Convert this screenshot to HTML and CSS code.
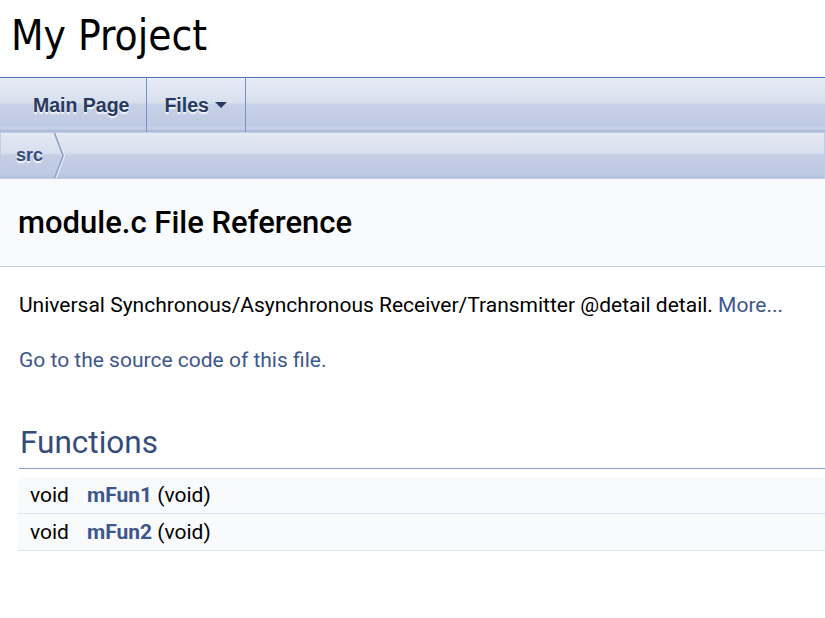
FILE: index.html
```html
<!DOCTYPE html>
<html>
<head>
<meta charset="utf-8">
<link rel="stylesheet" href="styles.css">
</head>
<body>
<div class="titlearea">
  <div class="projectname">My Project</div>
</div>
<nav class="tabs">
  <ul class="menu">
    <li class="tab"><a href="#" class="tab-main">Main Page</a></li>
    <li class="tab"><a href="#" class="has-sub">Files<span class="sub-arrow"></span></a></li>
  </ul>
</nav>
<div class="navpath">
  <ul>
    <li class="crumb"><a href="#">src</a><svg class="chev" width="12" height="45" viewBox="0 0 12 45"><path d="M2 0 L10.5 22.5 L2 45" fill="none" stroke="#e9eef6" stroke-width="3.2"/><path d="M1.5 0 L10 22.5 L1.5 45" fill="none" stroke="#8ea3cd" stroke-width="1.8"/></svg></li>
  </ul>
</div>
<div class="header">
  <div class="headertitle"><div class="title">module.c File Reference</div></div>
</div>
<div class="contents">
  <p class="brief">Universal Synchronous/Asynchronous Receiver/Transmitter @detail detail. <a href="#">More...</a></p>
  <p class="srclink"><a href="#">Go to the source code of this file.</a></p>
  <h2 class="groupheader">Functions</h2>
  <div class="memberdecls">
    <div class="memrow"><span class="memleft">void</span><span class="memright"><a href="#" class="el">mFun1</a> (void)</span></div>
    <div class="memrow"><span class="memleft">void</span><span class="memright"><a href="#" class="el">mFun2</a> (void)</span></div>
  </div>
</div>
</body>
</html>
```
FILE: styles.css
```css
html, body {
  margin: 0;
  padding: 0;
  background: #ffffff;
  overflow: hidden;
}
body {
  font-family: Roboto, "Liberation Sans", sans-serif;
  font-size: 21px;
  line-height: 33px;
  color: #000000;
}
a {
  color: #3D578C;
  text-decoration: none;
}
.titlearea {
  height: 77px;
  border-bottom: 1px solid #5373B4;
  display: flex;
  align-items: center;
  padding-left: 11px;
  box-sizing: content-box;
}
.projectname {
  font-family: "DejaVu Sans Condensed", "DejaVu Sans", sans-serif;
  font-size: 42px;
  line-height: 50px;
  margin-top: -6px;
  color: #000;
}
.tabs {
  height: 54px;
  background: linear-gradient(to bottom, #e7ecf5 0%, #d8e0ee 45%, #c6d0e6 50%, #bfcae3 88%, #cad4e9 93%, #b2c0de 97%, #a4b5d9 100%);
}
.menu {
  list-style: none;
  margin: 0;
  padding: 0 0 0 15px;
  display: flex;
  height: 54px;
}
.tab a {
  display: block;
  position: relative;
  height: 54px;
  line-height: 54px;
  padding: 0 17px 0 18px;
  font-family: "Liberation Sans", Arial, sans-serif;
  font-weight: bold;
  font-size: 19.5px;
  color: #283A5D;
  text-shadow: 0 1.5px 1.5px rgba(255,255,255,0.9);
  border-right: 1px solid #7a93c5;
}
.tab a.has-sub {
  padding: 0 36px 0 17px;
}
.sub-arrow {
  position: absolute;
  top: 50%;
  right: 18px;
  margin-top: -3px;
  width: 0;
  height: 0;
  border-left: 6px solid transparent;
  border-right: 6px solid transparent;
  border-top: 6px solid #283A5D;
}
.navpath ul {
  list-style: none;
  margin: 0;
  padding: 0;
  height: 45px;
  border: 1.5px solid #C2CDE4;
  background: linear-gradient(to bottom, #e4e9f3 0%, #d7dfee 45%, #c4cee5 50%, #bfcae3 90%, #b3c1de 100%);
  display: flex;
}
.crumb {
  display: flex;
  align-items: center;
  padding-left: 15px;
  height: 45px;
}
.crumb a {
  font-family: "Liberation Sans", Arial, sans-serif;
  font-weight: bold;
  font-size: 18px;
  color: #364D7C;
  text-shadow: 0 1.5px 1.5px rgba(255,255,255,0.9);
  line-height: 45px;
}
.chev {
  display: block;
  margin-left: 10px;
}
.header {
  background: #F9FAFC;
  border-bottom: 1px solid #C4CFE5;
  height: 87px;
  display: flex;
  align-items: center;
}
.headertitle {
  padding: 0 0 0 18px;
}
.title {
  font-family: Roboto, sans-serif;
  font-weight: 500;
  font-size: 31px;
  line-height: 40px;
  margin-top: 0;
}
.contents {
  padding: 0 0 0 18px;
}
.brief {
  margin: 22px 0 0 1px;
}
.srclink {
  margin: 22px 0 0 1px;
}
.groupheader {
  font-weight: normal;
  font-size: 31.5px;
  line-height: 40px;
  color: #354C7B;
  margin: 42px 0 0 1px;
  padding: 4px 0 5px 1px;
  border-bottom: 1.5px solid #879ECB;
}
.memberdecls {
  margin-top: 8px;
}
.memrow {
  display: flex;
  background: #F9FAFC;
  height: 36px;
  line-height: 36px;
  border-bottom: 1.5px solid #DEE4F0;
  padding-left: 12px;
}
.memleft {
  width: 57px;
}
.el {
  font-weight: bold;
}
```
